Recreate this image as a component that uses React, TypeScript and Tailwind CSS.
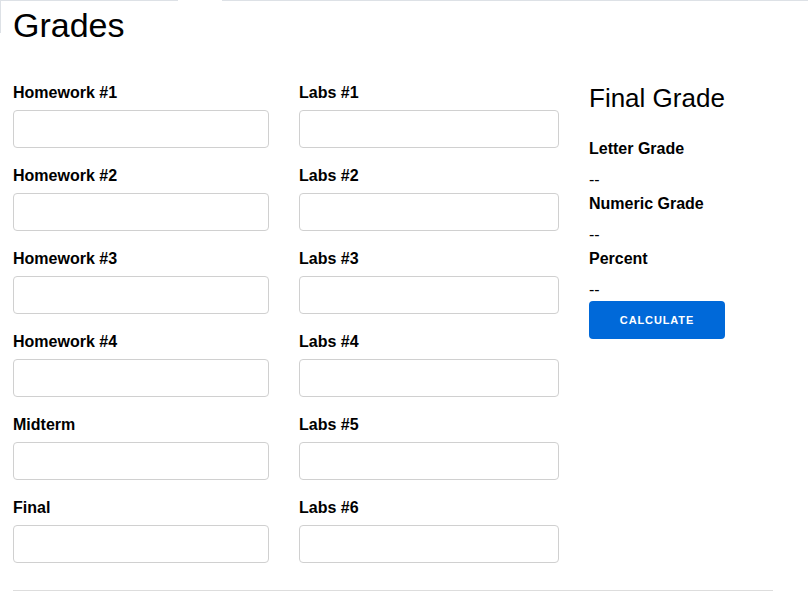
import React from "react";

const left = ["Homework #1", "Homework #2", "Homework #3", "Homework #4", "Midterm", "Final"];
const labs = ["Labs #1", "Labs #2", "Labs #3", "Labs #4", "Labs #5", "Labs #6"];

function Field({ label, w }: { label: string; w: string }) {
  return (
    <div className="mb-[17px]">
      <label className="block text-[16px] leading-[22px] font-bold text-black mb-[6px]">{label}</label>
      <input
        type="text"
        className={`${w} h-[38px] block border border-[#d0d0d0] rounded-[4px] bg-white outline-none px-2`}
      />
    </div>
  );
}

export default function App() {
  const results = ["Letter Grade", "Numeric Grade", "Percent"];

  return (
    <div className="w-[808px] h-[602px] bg-white overflow-hidden" style={{ fontFamily: '"Liberation Sans", Arial, sans-serif' }}>
      <div className="flex h-px">
        <div className="w-[178px] bg-[#dde1e6]" />
        <div className="w-[44px]" />
        <div className="flex-1 bg-[#dde1e6]" />
      </div>
      <div className="h-[32px] border-l border-[#dde1e6]">
        <h1 className="pl-[12px] pt-[7px] text-[34px] leading-[34px] font-normal text-black">Grades</h1>
      </div>

      <div className="pl-[13px] mt-[49px] grid grid-cols-[256px_260px_1fr] gap-x-[30px]">
        <div>
          {left.map(l => (
            <Field key={l} label={l} w="w-[256px]" />
          ))}
        </div>
        <div>
          {labs.map(l => (
            <Field key={l} label={l} w="w-[260px]" />
          ))}
        </div>
        <div>
          <h2 className="text-[26px] leading-[32px] font-normal text-black">Final Grade</h2>
          <div className="mt-[24px] flex flex-col gap-[3px]">
            {results.map(r => (
              <div key={r}>
                <div className="text-[16px] leading-[22px] font-bold text-black">{r}</div>
                <div className="mt-[10px] text-[16px] leading-[20px] text-black">--</div>
              </div>
            ))}
          </div>
          <button className="mt-[1px] w-[136px] h-[38px] rounded-[4px] bg-[#0069d9] text-white text-[11px] font-bold tracking-[0.08em]">
            CALCULATE
          </button>
        </div>
      </div>

      <div className="ml-[13px] mt-[10px] w-[760px] border-t border-[#dddddd]" />
    </div>
  );
}
